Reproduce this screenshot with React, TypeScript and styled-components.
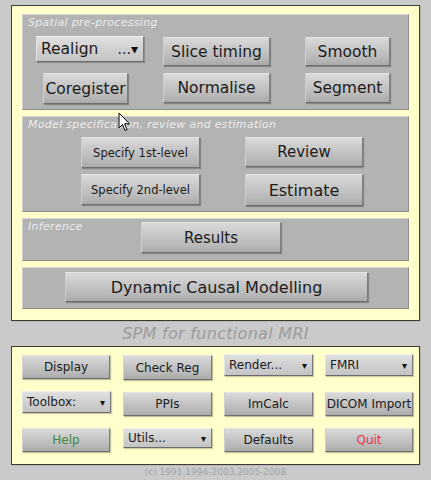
import React from "react";
import styled, { createGlobalStyle } from "styled-components";

const Global = createGlobalStyle`
  html, body { margin: 0; padding: 0; background: #cacaca; }
  body { font-family: "DejaVu Sans", "Liberation Sans", sans-serif; }
  * { box-sizing: border-box; }
`;

const Page = styled.div`
  position: relative;
  width: 431px;
  height: 480px;
  background: #cacaca;
  display: flex;
  flex-direction: column;
  padding-top: 5px;
  padding-left: 11px;
`;

const Panel = styled.div<{ $pt: number; $pb: number }>`
  width: 409px;
  background: #ffffcc;
  border: 1px solid #3c3c34;
  box-shadow: 1px 1px 0 #b8b8b0;
  padding: ${(p) => p.$pt}px 10px ${(p) => p.$pb}px 10px;
`;

const Stack = styled.div`
  display: flex;
  flex-direction: column;
  gap: 6px;
`;

const Section = styled.div<{ $h: number }>`
  position: relative;
  height: ${(p) => p.$h}px;
  background: #b3b3b3;
  border-top: 1px solid #d6d6d6;
  border-left: 1px solid #cfcfcf;
  border-right: 1px solid #8e8e8e;
  border-bottom: 1px solid #8e8e8e;
`;

const Label = styled.span`
  position: absolute;
  left: 5px;
  top: 1px;
  font-size: 11px;
  font-style: italic;
  letter-spacing: 0.3px;
  color: #ececec;
  white-space: nowrap;
`;

const SpatialGrid = styled.div`
  display: grid;
  grid-template-columns: 127px 142px 85px;
  grid-template-rows: 30px 30px;
  row-gap: 7px;
  padding: 21px 0 0 13px;
`;

const ModelGrid = styled.div`
  display: grid;
  grid-template-columns: 164px 118px;
  grid-template-rows: 31px 31px;
  row-gap: 6px;
  padding: 20px 0 0 58px;
`;

const SingleRow = styled.div<{ $pl: number; $pt: number }>`
  display: flex;
  padding: ${(p) => p.$pt}px 0 0 ${(p) => p.$pl}px;
`;

const Button = styled.div<{ $w: number; $h: number; $fs: number; $color?: string; $ml?: number; $mt?: number }>`
  width: ${(p) => p.$w}px;
  height: ${(p) => p.$h}px;
  margin-left: ${(p) => p.$ml ?? 0}px;
  margin-top: ${(p) => p.$mt ?? 0}px;
  display: flex;
  align-items: center;
  justify-content: center;
  font-size: ${(p) => p.$fs}px;
  color: ${(p) => p.$color ?? "#1c1c1c"};
  white-space: nowrap;
  background: linear-gradient(to bottom, #dadada 0%, #c9c9c9 35%, #b9b9b9 75%, #aaaaaa 100%);
  border-top: 1px solid #e4e4e4;
  border-left: 1px solid #d0d0d0;
  border-right: 1px solid #7c7c7c;
  border-bottom: 1px solid #6e6e6e;
  box-shadow: 1px 1px 1px rgba(0, 0, 0, 0.25);
`;

const Popup = styled.div<{ $w: number; $h: number; $fs: number; $mt?: number }>`
  width: ${(p) => p.$w}px;
  height: ${(p) => p.$h}px;
  margin-top: ${(p) => p.$mt ?? 0}px;
  display: flex;
  align-items: center;
  justify-content: space-between;
  padding: 0 5px 0 4px;
  font-size: ${(p) => p.$fs}px;
  color: #1c1c1c;
  white-space: nowrap;
  background: linear-gradient(to bottom, #e0e0e0 0%, #d0d0d0 50%, #c4c4c4 100%);
  border-top: 1px solid #f0f0f0;
  border-left: 1px solid #e4e4e4;
  border-right: 1px solid #7a7a7a;
  border-bottom: 1px solid #6c6c6c;
  box-shadow: 1px 1px 1px rgba(0, 0, 0, 0.2);
`;

const Arrow = styled.span<{ $fs: number }>`
  font-size: ${(p) => p.$fs}px;
  color: #111;
`;

const Caption = styled.div`
  width: 409px;
  height: 25px;
  display: flex;
  align-items: center;
  justify-content: center;
  font-size: 16px;
  font-style: italic;
  letter-spacing: 0.3px;
  color: #9c9c9c;
`;

const BottomGrid = styled.div`
  display: grid;
  grid-template-columns: repeat(4, 89px);
  grid-template-rows: 26px 26px 26px;
  column-gap: 12px;
  row-gap: 11px;
`;

const Copyright = styled.div`
  width: 409px;
  height: 14px;
  display: flex;
  align-items: center;
  justify-content: center;
  font-size: 9px;
  color: #a4a4a4;
`;

const Cursor = styled.svg`
  position: absolute;
  left: 118px;
  top: 112px;
`;

export default function App() {
  return (
    <Page>
      <Global />
      <Panel $pt={8} $pb={11}>
        <Stack>
          <Section $h={96}>
            <Label>Spatial pre-processing</Label>
            <SpatialGrid>
              <Popup $w={108} $h={26} $fs={15.5}>
                <span>Realign</span>
                <Arrow $fs={14}>...▾</Arrow>
              </Popup>
              <Button $w={107} $h={29} $fs={15.5} $mt={1}>Slice timing</Button>
              <Button $w={85} $h={29} $fs={15.5} $mt={1}>Smooth</Button>
              <Button $w={85} $h={31} $fs={15.5} $ml={7}>Coregister</Button>
              <Button $w={107} $h={30} $fs={15.5}>Normalise</Button>
              <Button $w={85} $h={30} $fs={15.5}>Segment</Button>
            </SpatialGrid>
          </Section>
          <Section $h={96}>
            <Label>Model specification, review and estimation</Label>
            <ModelGrid>
              <Button $w={119} $h={31} $fs={11.5}>Specify 1st-level</Button>
              <Button $w={118} $h={30} $fs={15}>Review</Button>
              <Button $w={119} $h={31} $fs={11.5}>Specify 2nd-level</Button>
              <Button $w={118} $h={32} $fs={16}>Estimate</Button>
            </ModelGrid>
          </Section>
          <Section $h={43}>
            <Label>Inference</Label>
            <SingleRow $pl={118} $pt={3}>
              <Button $w={140} $h={31} $fs={15}>Results</Button>
            </SingleRow>
          </Section>
          <Section $h={42}>
            <SingleRow $pl={42} $pt={4}>
              <Button $w={303} $h={30} $fs={16}>Dynamic Causal Modelling</Button>
            </SingleRow>
          </Section>
        </Stack>
      </Panel>
      <Caption>SPM for functional MRI</Caption>
      <Panel $pt={7} $pb={10}>
        <BottomGrid>
          <Button $w={88} $h={24} $fs={12} $mt={1}>Display</Button>
          <Button $w={89} $h={25} $fs={12} $mt={1}>Check Reg</Button>
          <Popup $w={89} $h={22} $fs={12}>
            <span>Render...</span>
            <Arrow $fs={10}>▾</Arrow>
          </Popup>
          <Popup $w={88} $h={22} $fs={12}>
            <span>FMRI</span>
            <Arrow $fs={10}>▾</Arrow>
          </Popup>
          <Popup $w={89} $h={22} $fs={12}>
            <span>Toolbox:</span>
            <Arrow $fs={10}>▾</Arrow>
          </Popup>
          <Button $w={89} $h={24} $fs={12} $mt={1}>PPIs</Button>
          <Button $w={89} $h={24} $fs={12} $mt={1}>ImCalc</Button>
          <Button $w={88} $h={24} $fs={12} $mt={1}>DICOM Import</Button>
          <Button $w={88} $h={24} $fs={12} $color="#3f8a3f">Help</Button>
          <Popup $w={89} $h={20} $fs={12}>
            <span>Utils...</span>
            <Arrow $fs={10}>▾</Arrow>
          </Popup>
          <Button $w={89} $h={24} $fs={12}>Defaults</Button>
          <Button $w={88} $h={24} $fs={12} $color="#e23a4a">Quit</Button>
        </BottomGrid>
      </Panel>
      <Copyright>(c) 1991,1994-2003,2005-2008</Copyright>
      <Cursor width="13" height="21" viewBox="0 0 13 21">
        <path d="M1 1 L1 16 L4.5 12.5 L7 18.5 L9 17.6 L6.6 11.8 L11.5 11.8 Z" fill="#fff" stroke="#000" strokeWidth="1" strokeLinejoin="round" />
      </Cursor>
    </Page>
  );
}
